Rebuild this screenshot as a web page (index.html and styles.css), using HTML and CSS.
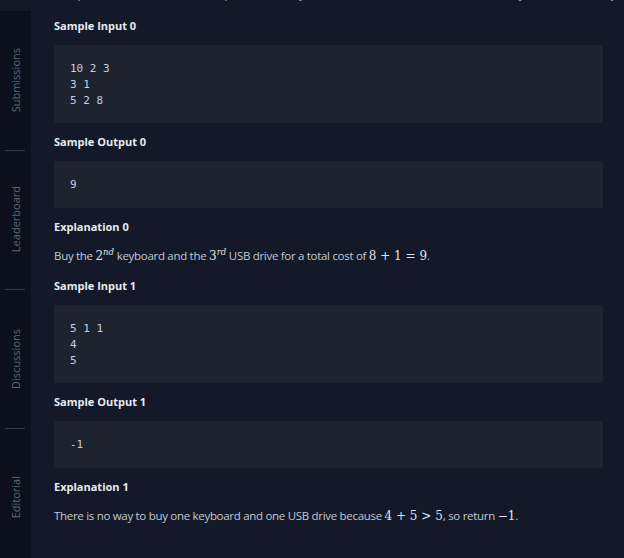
FILE: index.html
```html
<!DOCTYPE html>
<html>
<head>
<meta charset="utf-8">
<link rel="stylesheet" href="styles.css">
</head>
<body>
<div class="page">
  <aside class="sidebar">
    <div class="tab"><span class="tab-label">Submissions</span></div>
    <div class="tab"><span class="tab-label">Leaderboard</span></div>
    <div class="tab"><span class="tab-label">Discussions</span></div>
    <div class="tab"><span class="tab-label">Editorial</span></div>
  </aside>
  <main class="content">
    <p class="cut">Complete the function; it has the parameters keyboards[n], drives[m], and b. The sum is keyboard[i] + drives[j]</p>

    <h4 class="title first">Sample Input 0</h4>
    <pre class="block multi">10 2 3
3 1
5 2 8</pre>

    <h4 class="title">Sample Output 0</h4>
    <pre class="block">9</pre>

    <h4 class="title">Explanation 0</h4>
    <p class="text">Buy the <span class="math">2<sup>nd</sup></span> keyboard and the <span class="math">3<sup>rd</sup></span> USB drive for a total cost of <span class="math">8 + 1 = 9</span>.</p>

    <h4 class="title after-text">Sample Input 1</h4>
    <pre class="block multi">5 1 1
4
5</pre>

    <h4 class="title">Sample Output 1</h4>
    <pre class="block">-1</pre>

    <h4 class="title">Explanation 1</h4>
    <p class="text">There is no way to buy one keyboard and one USB drive because <span class="math">4 + 5 &gt; 5</span>, so return <span class="math">&minus;1</span>.</p>
  </main>
</div>
</body>
</html>
```

FILE: styles.css
```css
html, body {
  margin: 0;
  padding: 0;
  background: #131928;
  height: 100%;
  overflow: hidden;
}

.page {
  display: flex;
  min-height: 558px;
  font-family: "Open Sans", "Noto Sans", sans-serif;
}

.sidebar {
  width: 31px;
  flex: 0 0 31px;
  margin-top: 11px;
  background: #0b101c;
  display: flex;
  flex-direction: column;
}

.tab {
  height: 139px;
  flex: 0 0 139px;
  display: flex;
  align-items: center;
  justify-content: center;
  position: relative;
}

.tab + .tab::before {
  content: "";
  position: absolute;
  top: 0;
  left: 5px;
  width: 20px;
  height: 1px;
  background: #353b49;
}

.tab-label {
  writing-mode: vertical-rl;
  transform: rotate(180deg);
  font-size: 11px;
  color: #5f6677;
}

.content {
  flex: 1;
  padding: 0 21px 0 23px;
  display: flex;
  flex-direction: column;
  overflow: hidden;
}

.cut {
  margin: -16px 0 0 0;
  line-height: 20px;
  font-size: 11px;
  color: #aeb4c0;
  white-space: nowrap;
}

.title {
  margin: 11px 0 0 0;
  font-size: 11px;
  line-height: 16px;
  font-weight: 700;
  color: #e8ebf0;
}

.title.first {
  margin-top: 14px;
}

.title.after-text {
  margin-top: 12px;
}

.block {
  margin: 11px 0 0 0;
  padding: 16px 16px 15px 16px;
  background: #1e2330;
  font-family: "DejaVu Sans Mono", "Liberation Mono", monospace;
  font-size: 11px;
  line-height: 16px;
  color: #c5cee0;
}

.block.multi {
  padding-bottom: 14px;
}

.text {
  margin: 11px 0 0 0;
  font-size: 11.5px;
  letter-spacing: -0.3px;
  line-height: 20px;
  color: #c3c8d2;
  white-space: nowrap;
}

.math {
  font-family: "DejaVu Serif", "Liberation Serif", serif;
  font-size: 12px;
  letter-spacing: 0;
  color: #dfe3ea;
}

.math sup {
  font-style: italic;
  font-size: 8.5px;
  line-height: 0;
  vertical-align: 5px;
}
```
